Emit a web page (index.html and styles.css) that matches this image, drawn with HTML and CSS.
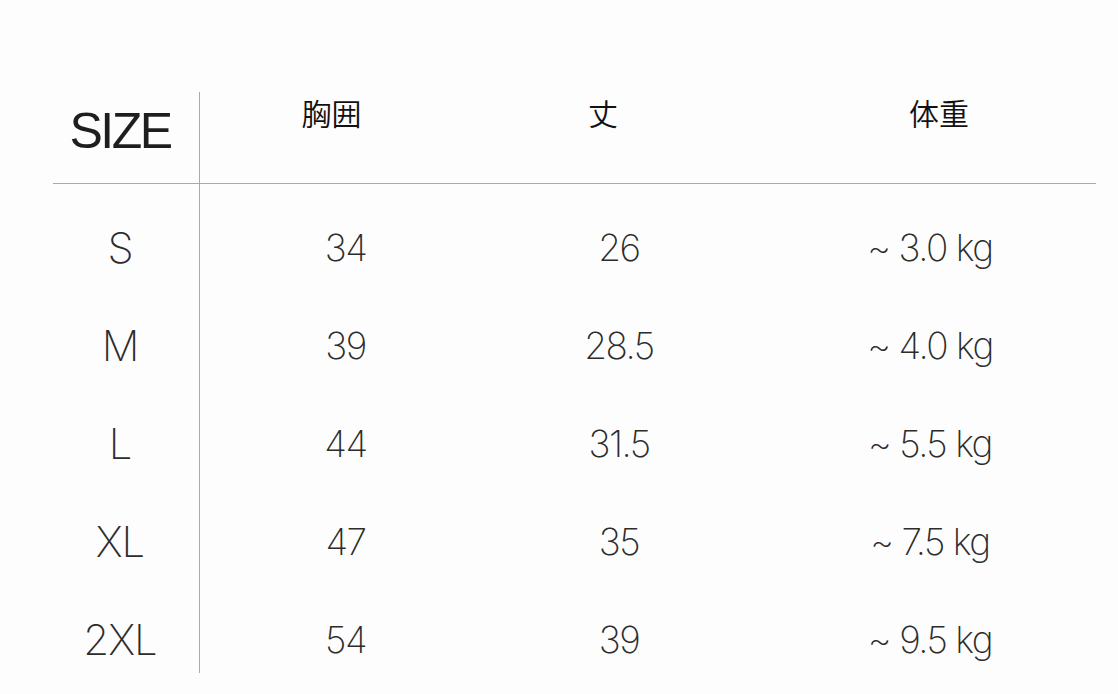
FILE: index.html
```html
<!DOCTYPE html>
<html lang="ja">
<head>
<meta charset="utf-8">
<title>サイズ表</title>
<link rel="stylesheet" href="styles.css">
</head>
<body>
<div class="chart">
  <div class="row head">
    <div class="cell size-cell size-title">SIZE</div>
    <div class="cell h h1">胸囲</div>
    <div class="cell h h2">丈</div>
    <div class="cell h h3">体重</div>
  </div>
  <div class="row body first">
    <div class="cell size-cell">S</div>
    <div class="cell v">34</div>
    <div class="cell v">26</div>
    <div class="cell v w">~ 3.0 kg</div>
  </div>
  <div class="row body">
    <div class="cell size-cell">M</div>
    <div class="cell v">39</div>
    <div class="cell v">28.5</div>
    <div class="cell v w">~ 4.0 kg</div>
  </div>
  <div class="row body">
    <div class="cell size-cell">L</div>
    <div class="cell v">44</div>
    <div class="cell v">31.5</div>
    <div class="cell v w">~ 5.5 kg</div>
  </div>
  <div class="row body">
    <div class="cell size-cell">XL</div>
    <div class="cell v">47</div>
    <div class="cell v">35</div>
    <div class="cell v w">~ 7.5 kg</div>
  </div>
  <div class="row body last">
    <div class="cell size-cell">2XL</div>
    <div class="cell v">54</div>
    <div class="cell v">39</div>
    <div class="cell v w">~ 9.5 kg</div>
  </div>
</div>
</body>
</html>
```
FILE: styles.css
```css
html, body {
  margin: 0;
  padding: 0;
  background: #fdfdfd;
}
body {
  width: 1118px;
  height: 694px;
  overflow: hidden;
  font-family: "Inter", "Noto Sans CJK JP", sans-serif;
  color: #2a2a2a;
}
.chart {
  margin: 92px 0 0 53px;
  width: 1043px;
}
.row {
  display: grid;
  grid-template-columns: 147px 291px 256px 1fr;
}
.cell {
  text-align: center;
  box-sizing: border-box;
}
.size-cell {
  border-right: 1px solid #a9a9a9;
  padding-right: 12px;
}
.head {
  height: 92px;
  border-bottom: 1px solid #a9a9a9;
  box-sizing: border-box;
}
.size-title {
  font-family: "Liberation Sans", Arial, sans-serif;
  font-size: 50px;
  line-height: 56px;
  letter-spacing: -2.5px;
  color: #1e1e1e;
  padding-top: 11px;
  padding-right: 12px;
}
.h {
  font-family: "Noto Sans CJK JP", sans-serif;
  font-weight: 350;
  font-size: 30px;
  line-height: 30px;
  padding-top: 5px;
  color: #111;
}
.h1 { padding-right: 28px; }
.h2 { padding-right: 32px; }
.h3 { padding-left: 35px; }
.body .cell {
  height: 98px;
  font-family: "Inter", sans-serif;
  font-weight: 200;
  font-size: 37px;
  line-height: 98px;
  letter-spacing: -1.5px;
  color: #2c2c2c;
}
.body .size-cell {
  font-size: 42px;
  letter-spacing: -1px;
}
.body.first .cell {
  height: 113px;
  padding-top: 15px;
}
.body.last .cell {
  height: 82px;
}
.w {
  padding-left: 17px;
}
```
